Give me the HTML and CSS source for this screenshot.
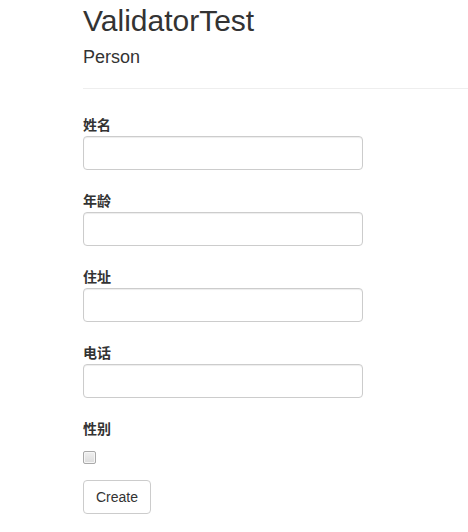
FILE: index.html
```html
<!DOCTYPE html>
<html lang="zh-CN">
<head>
<meta charset="utf-8">
<title>ValidatorTest</title>
<link rel="stylesheet" href="styles.css">
</head>
<body>
<div class="page">
  <h2 class="title">ValidatorTest</h2>
  <h4 class="subtitle">Person</h4>
  <hr class="divider">
  <form class="form">
    <div class="form-group">
      <label class="control-label" for="name">姓名</label>
      <input class="form-control" id="name" type="text">
    </div>
    <div class="form-group">
      <label class="control-label" for="age">年龄</label>
      <input class="form-control" id="age" type="text">
    </div>
    <div class="form-group">
      <label class="control-label" for="addr">住址</label>
      <input class="form-control" id="addr" type="text">
    </div>
    <div class="form-group">
      <label class="control-label" for="tel">电话</label>
      <input class="form-control" id="tel" type="text">
    </div>
    <div class="form-group-check">
      <label class="control-label" for="sex">性别</label>
      <div class="checkbox-row"><input class="check" id="sex" type="checkbox"></div>
    </div>
    <button class="btn" type="button">Create</button>
  </form>
</div>
</body>
</html>
```
FILE: styles.css
```css
html, body {
  margin: 0;
  padding: 0;
  background: #fff;
}
body {
  font-family: "Liberation Sans", "Noto Sans CJK SC", sans-serif;
  font-size: 14px;
  line-height: 20px;
  color: #333;
}
.page {
  padding-left: 83px;
}
.title {
  margin: 4px 0 10px;
  font-size: 30px;
  line-height: 33px;
  font-weight: normal;
}
.subtitle {
  margin: 0;
  font-size: 18px;
  line-height: 21px;
  font-weight: normal;
}
.divider {
  margin: 20px 0 20px;
  border: 0;
  border-top: 1px solid #eee;
  height: 0;
}
.form {
  margin: 0;
}
.form-group {
  margin-bottom: 15px;
}
.control-label {
  display: block;
  padding-top: 6px;
  line-height: 20px;
  font-weight: bold;
  font-family: "Liberation Sans", "Noto Sans CJK SC", sans-serif;
}
.form-control {
  display: block;
  box-sizing: border-box;
  width: 280px;
  height: 34px;
  margin: 1px 0 0;
  padding: 6px 12px;
  font-size: 14px;
  font-family: inherit;
  color: #555;
  background: #fff;
  border: 1px solid #ccc;
  border-radius: 4px;
  box-shadow: inset 0 1px 1px rgba(0, 0, 0, .075);
  outline: none;
}
.form-group-check {
  margin-bottom: 16px;
}
.checkbox-row {
  margin-top: 12px;
  height: 13px;
}
.check {
  -webkit-appearance: none;
  appearance: none;
  display: block;
  box-sizing: border-box;
  width: 13px;
  height: 13px;
  margin: 0;
  border: 1px solid #a9a9a9;
  border-radius: 2px;
  background: linear-gradient(#f0f0f0, #dcdcdc);
  box-shadow: inset 0 0 0 1px #f6f6f6;
}
.btn {
  display: inline-block;
  box-sizing: border-box;
  height: 34px;
  padding: 6px 12px;
  font-family: "Liberation Sans", sans-serif;
  font-size: 14px;
  line-height: 20px;
  color: #333;
  background: #fff;
  border: 1px solid #ccc;
  border-radius: 4px;
  cursor: pointer;
}
```
